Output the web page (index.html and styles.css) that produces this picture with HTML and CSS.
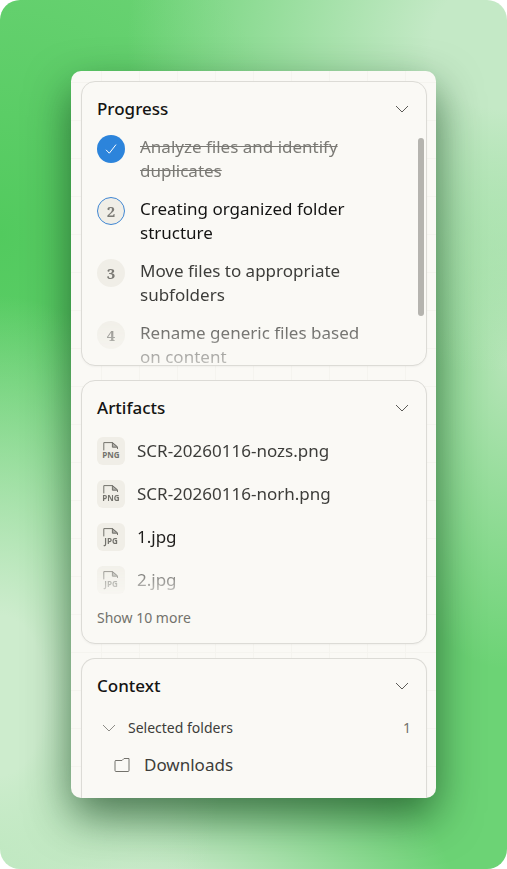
FILE: index.html
```html
<!DOCTYPE html>
<html lang="en">
<head>
  <meta charset="UTF-8">
  <meta name="viewport" content="width=device-width, initial-scale=1">
  <title>Progress</title>
  <link rel="stylesheet" href="styles.css">
</head>
<body>
  <div class="backdrop">
    <main class="panel">

      <section class="card progress">
        <h2>
          <button class="card-header" type="button">Progress
            <svg class="chevron" viewBox="0 0 14 8"><path d="M1 1l6 6 6-6"/></svg>
          </button>
        </h2>
        <ol class="steps">
          <li class="step done">
            <span class="badge"><svg class="check" viewBox="0 0 12 12"><path d="M1 6.8l3.3 3.4L11 1.6"/></svg></span>
            <span class="step-text">Analyze files and identify duplicates</span>
          </li>
          <li class="step current">
            <span class="badge">2</span>
            <span class="step-text">Creating organized folder structure</span>
          </li>
          <li class="step">
            <span class="badge">3</span>
            <span class="step-text">Move files to appropriate subfolders</span>
          </li>
          <li class="step">
            <span class="badge">4</span>
            <span class="step-text">Rename generic files based on content</span>
          </li>
        </ol>
        <div class="scroll-thumb"></div>
      </section>

      <section class="card artifacts">
        <h2>
          <button class="card-header" type="button">Artifacts
            <svg class="chevron" viewBox="0 0 14 8"><path d="M1 1l6 6 6-6"/></svg>
          </button>
        </h2>
        <ul class="files">
          <li class="file">
            <svg class="file-icon" viewBox="0 0 28 28"><path d="M6.8 13.4V5.6h8.8l4.9 4.4V12"/><path class="fold" d="M15.4 5.6v4.6h5.2z"/><text x="14" y="21">PNG</text></svg>
            SCR-20260116-nozs.png
          </li>
          <li class="file">
            <svg class="file-icon" viewBox="0 0 28 28"><path d="M6.8 13.4V5.6h8.8l4.9 4.4V12"/><path class="fold" d="M15.4 5.6v4.6h5.2z"/><text x="14" y="21">PNG</text></svg>
            SCR-20260116-norh.png
          </li>
          <li class="file strong">
            <svg class="file-icon" viewBox="0 0 28 28"><path d="M6.8 13.4V5.6h8.8l4.9 4.4V12"/><path class="fold" d="M15.4 5.6v4.6h5.2z"/><text x="14" y="21">JPG</text></svg>
            1.jpg
          </li>
          <li class="file">
            <svg class="file-icon" viewBox="0 0 28 28"><path d="M6.8 13.4V5.6h8.8l4.9 4.4V12"/><path class="fold" d="M15.4 5.6v4.6h5.2z"/><text x="14" y="21">JPG</text></svg>
            2.jpg
          </li>
        </ul>
        <button class="show-more" type="button">Show 10 more</button>
      </section>

      <section class="card context">
        <h2>
          <button class="card-header" type="button">Context
            <svg class="chevron" viewBox="0 0 14 8"><path d="M1 1l6 6 6-6"/></svg>
          </button>
        </h2>
        <button class="group" type="button">
          <svg class="chevron light" viewBox="0 0 14 8"><path d="M1 1l6 6 6-6"/></svg>
          <span class="group-name">Selected folders</span>
          <span class="count">1</span>
        </button>
        <div class="folder">
          <svg class="folder-icon" viewBox="0 0 16 14"><path d="M1.5 2.5h6.5l2-2h5v12a1 1 0 0 1-1 1h-12a1 1 0 0 1-1-1v-9a1 1 0 0 1 1-1"/></svg>
          Downloads
        </div>
      </section>

    </main>
  </div>
</body>
</html>
```

FILE: styles.css
```css
* {
  box-sizing: border-box;
}

body {
  margin: 0;
  background: #ffffff;
  font-family: "Noto Sans", "Liberation Sans", sans-serif;
  font-size: 17px;
  line-height: 24px;
  color: #3d3d3a;
}

h2, ol, ul {
  margin: 0;
  padding: 0;
  list-style: none;
  font-size: 17px;
}

button {
  border: none;
  padding: 0;
  background: none;
  font: inherit;
  color: inherit;
  text-align: left;
  cursor: pointer;
}

svg {
  fill: none;
  stroke: currentColor;
  flex: none;
}

.backdrop {
  display: flex;
  min-height: 100vh;
  padding: 71px;
  border-radius: 20px;
  overflow: hidden;
  background:
    radial-gradient(ellipse 45% 46% at 0% 80%, #cdeccd 20%, rgba(205, 236, 205, 0) 100%),
    radial-gradient(ellipse 60% 22% at 30% 104%, #c4e8c5 20%, rgba(196, 232, 197, 0) 100%),
    radial-gradient(ellipse 75% 38% at 100% 5%, #c4e9c6 20%, rgba(196, 233, 198, 0) 100%),
    radial-gradient(ellipse 30% 35% at 100% 42%, #b4e4b6 0%, rgba(180, 228, 182, 0) 100%),
    radial-gradient(ellipse 60% 40% at 0% 27%, #52ca5e 0%, rgba(82, 202, 94, 0) 100%),
    #6cd375;
}

.panel {
  flex: 1;
  min-width: 0;
  display: flex;
  flex-direction: column;
  gap: 14px;
  padding: 10px 9px 0 10px;
  border-radius: 10px;
  overflow: hidden;
  background-color: #faf9f5;
  background-image:
    linear-gradient(to right, #f5f4ef 1px, transparent 1px),
    linear-gradient(to bottom, #f5f4ef 1px, transparent 1px);
  background-size: 38px 38px;
  background-position: 30px 11px;
  box-shadow: 0 18px 44px rgba(10, 50, 20, 0.62);
}

.card {
  position: relative;
  padding: 0 15px;
  border: 1px solid #dcdbd6;
  border-radius: 14px;
  background: #faf9f5;
  box-shadow: 0 1px 2px rgba(0, 0, 0, 0.04);
}

.card-header {
  display: flex;
  justify-content: space-between;
  align-items: center;
  width: 100%;
  height: 53px;
  padding-right: 2px;
  font-weight: 500;
  color: #141413;
}

.chevron {
  width: 14px;
  height: 8px;
  color: #5c5b57;
}

.chevron.light {
  color: #8d8c87;
}

/* progress */

.steps {
  display: flex;
  flex-direction: column;
  gap: 14px;
  height: 230px;
  overflow: hidden;
  -webkit-mask-image: linear-gradient(to bottom, #000 76%, rgba(0, 0, 0, 0.3));
  mask-image: linear-gradient(to bottom, #000 76%, rgba(0, 0, 0, 0.3));
}

.step {
  display: flex;
  gap: 15px;
  padding-right: 40px;
}

.badge {
  display: flex;
  flex: none;
  justify-content: center;
  align-items: center;
  width: 28px;
  height: 28px;
  border-radius: 50%;
  background: #f0eee7;
  font-family: "Noto Serif", "Liberation Serif", serif;
  font-size: 15px;
  font-weight: bold;
  color: #7b7a75;
}

.done .badge {
  background: #2c84db;
  color: #ffffff;
}

.done .step-text {
  color: #7b7a75;
  text-decoration: line-through;
}

.current .badge {
  border: 1px solid #3f86d2;
}

.current .step-text {
  color: #141413;
}

.check {
  width: 12px;
  height: 12px;
}

.scroll-thumb {
  position: absolute;
  top: 56px;
  right: 2px;
  width: 6px;
  height: 178px;
  border-radius: 3px;
  background: #b5b4af;
}

/* artifacts */

.files {
  display: flex;
  flex-direction: column;
  gap: 15px;
  padding-top: 3px;
  -webkit-mask-image: linear-gradient(to bottom, #000 76%, rgba(0, 0, 0, 0.25));
  mask-image: linear-gradient(to bottom, #000 76%, rgba(0, 0, 0, 0.25));
}

.file {
  display: flex;
  align-items: center;
  gap: 12px;
  height: 28px;
}

.strong {
  color: #1f1e1c;
}

.file-icon {
  width: 28px;
  height: 28px;
  border-radius: 6px;
  background: #f0eee7;
  color: #73726c;
}

.file-icon .fold {
  fill: #b0aea8;
}

.file-icon text {
  fill: #73726c;
  stroke: none;
  font-family: "Open Sans", "Noto Sans", sans-serif;
  font-size: 8px;
  font-weight: bold;
  text-anchor: middle;
}

.show-more {
  display: block;
  margin: 14px 0 15px;
  font-size: 14px;
  line-height: 20px;
  color: #73726c;
}

/* context */

.context {
  flex: 1;
  padding-bottom: 20px;
  border-bottom: none;
  border-radius: 14px 14px 0 0;
}

.group {
  display: flex;
  align-items: center;
  width: 100%;
  height: 32px;
  padding-left: 5px;
  font-size: 14px;
}

.group-name {
  flex: 1;
  margin-left: 12px;
}

.count {
  color: #73726c;
}

.folder {
  display: flex;
  align-items: center;
  gap: 14px;
  padding: 9px 0 0 17px;
}

.folder-icon {
  width: 16px;
  height: 14px;
  color: #73726c;
}
```
